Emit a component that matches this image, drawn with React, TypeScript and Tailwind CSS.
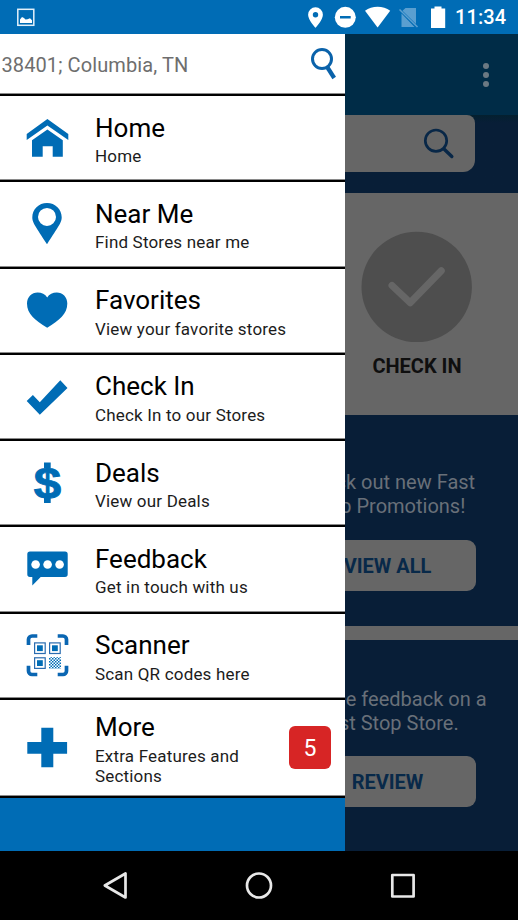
import type { ReactNode } from 'react';

type Item = { title: string; subtitle: string; icon: ReactNode; badge?: number };

const finder = (x: number, y: number) => (
  <g key={`${x}-${y}`}>
    <rect x={x + 0.6} y={y + 0.6} width="10.6" height="10.6" fill="none" stroke="#2a6cb0" strokeWidth="1.2" />
    <rect x={x + 3} y={y + 3} width="5.8" height="5.8" />
  </g>
);

const items: Item[] = [
  {
    title: 'Home',
    subtitle: 'Home',
    icon: (
      <>
        <path d="M22.4 3 43.3 18v6L22.4 9.500 1.700 24v-6z" />
        <path d="M22.4 13.6 37.8 24.3v16.4H27.7V30.3h-10v10.4H7V24.3z" />
      </>
    ),
  },
  {
    title: 'Near Me',
    subtitle: 'Find Stores near me',
    icon: (
      <path
        fillRule="evenodd"
        d="M22 1C13.700 1 7.300 7.300 7.300 15.300 7.300 20.500 10.500 24.500 22 42.200 33.500 24.500 36.700 20.500 36.700 15.300 36.700 7.300 30.300 1 22 1zm0 4.900a9 9 0 1 1 0 18 9 9 0 0 1 0-18z"
      />
    ),
  },
  {
    title: 'Favorites',
    subtitle: 'View your favorite stores',
    icon: <path d="M22.2 38.8C10 31 2 25 2 14.5 2 8 6.8 3.4 12.6 3.4c4 0 7.7 1.8 9.6 5 1.9-3.2 5.600-5 9.600-5 5.800 0 10.500 4.600 10.500 11.100 0 10.500-8 16.500-20.100 24.300z" />,
  },
  {
    title: 'Check In',
    subtitle: 'Check In to our Stores',
    icon: <path d="M35.300 5.200 42.500 13 14.800 39.700 1.700 26 7.900 20l6.900 7.200z" />,
  },
  {
    title: 'Deals',
    subtitle: 'View our Deals',
    icon: (
      <>
        <text
          transform="translate(22.4 37.5) scale(1.12 1)"
          textAnchor="middle"
          stroke="#006cb5"
          strokeWidth="0.900"
          className="font-['Liberation_Sans',sans-serif] text-[44px] font-bold"
        >
          $
        </text>
        <rect x="19" y="1.500" width="6.700" height="6" />
        <rect x="19" y="36" width="6.700" height="6" />
      </>
    ),
  },
  {
    title: 'Feedback',
    subtitle: 'Get in touch with us',
    icon: (
      <>
        <path d="M5 4.500h35a2.700 2.700 0 0 1 2.700 2.700v20A2.700 2.700 0 0 1 40 29.900H15.700L7.300 38.500v-8.600H5a2.700 2.700 0 0 1-2.700-2.700v-20A2.700 2.700 0 0 1 5 4.500z" />
        <g fill="#fff">
          <circle cx="10.600" cy="17.500" r="4.300" />
          <circle cx="22.600" cy="17.500" r="4.300" />
          <circle cx="34.600" cy="17.500" r="4.300" />
        </g>
      </>
    ),
  },
  {
    title: 'Scanner',
    subtitle: 'Scan QR codes here',
    icon: (
      <>
        <path
          fill="none"
          stroke="#0a66b2"
          strokeWidth="3.700"
          d="M3.500 11V5.500a3.500 3.500 0 0 1 3.500-3.500h5.300M32.700 2H38a3.500 3.500 0 0 1 3.500 3.500V11M41.500 31.700v5.300a3.500 3.500 0 0 1-3.500 3.500h-5.300M12.300 40.500H7A3.500 3.500 0 0 1 3.500 37v-5.300"
        />
        {finder(9, 8.3)}
        {finder(24, 8.3)}
        {finder(9, 23.2)}
        <defs>
          <pattern id="modules" width="3" height="3" patternUnits="userSpaceOnUse">
            <rect width="1.500" height="1.500" />
            <rect x="1.500" y="1.500" width="1.500" height="1.500" />
          </pattern>
        </defs>
        <rect x="24" y="23.200" width="12" height="11.500" fill="url(#modules)" />
      </>
    ),
  },
  {
    title: 'More',
    subtitle: 'Extra Features and Sections',
    icon: <path d="M16.300 1.700h12V16h13.800v11.700H28.300v13.600h-12V27.700h-14V16h14z" />,
    badge: 5,
  },
];

function StatusBar() {
  return (
    <header className="flex h-[34px] items-center bg-[#006cb5] text-white">
      <svg className="ml-[16px]" width="20" height="34" viewBox="16 0 20 34" fill="#fff">
        <rect x="17.800" y="9.300" width="16" height="16" fill="none" stroke="#e2f0fa" strokeWidth="1.500" />
        <path d="M20 23v-3.500l2-2.500 2 1 1.500 1.500 2-.3 2.500-1 2 2V23z" />
      </svg>
      <svg className="ml-auto" width="146" height="34" viewBox="304 0 146 34" fill="#fff">
        <path
          fillRule="evenodd"
          d="M315.500 7.300a7.400 7.400 0 0 0-7.400 7.400c0 5.300 7.400 13 7.400 13s7.400-7.700 7.400-13a7.400 7.400 0 0 0-7.400-7.400zm0 4.700a2.700 2.700 0 1 1 0 5.400 2.700 2.700 0 0 1 0-5.400z"
        />
        <circle cx="345.300" cy="17.300" r="10.500" />
        <rect x="340" y="16" width="10.700" height="2.500" fill="#006cb5" />
        <path d="M377.600 27.500 365 10.800c3.500-2.600 8-4 12.600-4s9.100 1.400 12.600 4z" />
        <path fill="#5a9fd0" d="M405.500 8H416v16L402.500 10.800zM401.500 13.500 414.500 27H401.500z" />
        <path stroke="#5a9fd0" strokeWidth="1.600" d="m399.500 9.500 18 17.500" />
        <path d="M434.500 6.500h7V8.500h3.700V28h-14.200V8.500h3.500z" />
      </svg>
      <span className="mr-[11px] ml-[5px] w-[52px] pt-px text-[20px] leading-[33px] font-medium tracking-[0.1px] whitespace-nowrap">11:34</span>
    </header>
  );
}

function Page() {
  return (
    <main className="h-[817px] bg-[#666]">
      <div className="flex h-[81px] items-center justify-end bg-[#002c47] pr-[29px]">
        <div className="flex flex-col gap-[3px]">
          <i className="size-[6px] rounded-full bg-[#6b7983]" />
          <i className="size-[6px] rounded-full bg-[#6b7983]" />
          <i className="size-[6px] rounded-full bg-[#6b7983]" />
        </div>
      </div>
      <div className="h-[78px] bg-gradient-to-b from-[#04202f] via-[#081e37] via-10% to-[#081e37] pr-[43px]">
        <div className="flex h-[57px] justify-end rounded-[12px] rounded-t-[8px] bg-[#666] pr-[20px]">
          <svg width="34" height="57" viewBox="421 115 34 57" fill="none" stroke="#082747">
            <circle cx="436" cy="140.700" r="10.700" strokeWidth="2.700" />
            <path d="m444 149 7.800 7.500" strokeWidth="3.400" strokeLinecap="round" />
          </svg>
        </div>
      </div>
      <div className="flex h-[222px] justify-end pt-[38px] pr-[41px]">
        <div className="flex w-[120px] flex-col items-center">
          <svg width="112" height="112" viewBox="361 231 112 112">
            <circle cx="416.700" cy="286.900" r="55.200" fill="#4e4e4e" />
            <path d="M392 285.500 410.200 302.800 441.300 270.800" fill="none" stroke="#666" strokeWidth="7" strokeLinecap="round" strokeLinejoin="round" />
          </svg>
          <span className="mt-[11px] text-[20px] leading-6 font-bold whitespace-nowrap text-[#0f0f0f]">CHECK IN</span>
        </div>
      </div>
      <Promo height="h-[211px] pt-[55px]" lines={['Check out new Fast', 'Stop Promotions!']} action="VIEW ALL" gap="mt-[22px]" />
      <div className="h-[14px]" />
      <Promo height="h-[211px] pt-[47px]" lines={['Provide feedback on a', 'Fast Stop Store.']} action="REVIEW" gap="mt-[21px]" />
    </main>
  );
}

function Promo({ height, lines, action, gap }: { height: string; lines: string[]; action: string; gap: string }) {
  return (
    <section className={`flex flex-col items-end bg-[#081e37] ${height}`}>
      <div className="flex w-[260px] flex-col items-center">
        {lines.map((line) => (
          <p key={line} className="text-[20px] leading-6 whitespace-nowrap text-[#697079]">
            {line}
          </p>
        ))}
        <button className={`mr-px h-[51px] w-[176px] rounded-[9px] bg-[#666] text-[20px] font-bold text-[#082949] ${gap}`}>{action}</button>
      </div>
    </section>
  );
}

function Row({ title, subtitle, icon, badge }: Item) {
  return (
    <li
      className={`flex border-b-2 border-black bg-white pl-[25px] shadow-[inset_0_-1px_0_#8a8a8a] ${badge ? 'h-[98px] pt-[12px]' : 'h-[86.25px] pt-[16.5px]'}`}
    >
      <svg className={`shrink-0 overflow-visible ${badge ? 'mt-[14px]' : 'mt-[3.5px]'}`} width="44" height="44" viewBox="0 0 44 44" fill="#006cb5">
        {icon}
      </svg>
      <div className="ml-[26px] w-[170px] shrink-0 whitespace-nowrap">
        <p className="text-[26px] leading-[30px] text-black">{title}</p>
        <p className={`text-[17px] leading-5 tracking-[0.18px] text-[#1c1c1c] ${badge ? 'mt-[4px] whitespace-normal' : 'mt-[3.5px]'}`}>{subtitle}</p>
      </div>
      {badge && (
        <span className="mt-[14px] ml-[24px] h-[43px] w-[42px] shrink-0 rounded-[6px] bg-[#d72525] text-center text-[23px] leading-[46px] text-white">
          {badge}
        </span>
      )}
    </li>
  );
}

function Drawer() {
  return (
    <nav className="absolute top-[34px] left-0 h-[817px] w-[345px] overflow-hidden bg-[#006cb5]">
      <div className="flex h-[62px] items-center justify-between border-b-2 border-black bg-white pr-[6px] pl-[1.500px] shadow-[inset_0_-1px_0_#8a8a8a]">
        <span className="pt-[2px] text-[20px] tracking-[0.1px] whitespace-nowrap text-[#6e6e6e]">38401; Columbia, TN</span>
        <svg width="30" height="60" viewBox="309 34 30 60" fill="none" stroke="#0a62aa">
          <circle cx="322" cy="59" r="9.500" strokeWidth="3" />
          <path d="m327.500 67.500 6.700 10.500" strokeWidth="4.200" />
        </svg>
      </div>
      <ul>
        {items.map((item) => (
          <Row key={item.title} {...item} />
        ))}
      </ul>
    </nav>
  );
}

export default function App() {
  return (
    <div className="relative h-[920px] w-[518px] overflow-hidden bg-black font-['Roboto',sans-serif]">
      <StatusBar />
      <Page />
      <Drawer />
      <footer className="h-[69px] bg-black">
        <svg width="518" height="69" viewBox="0 851 518 69" fill="none" stroke="#e8e8e8" strokeWidth="2.700" strokeLinejoin="round">
          <path d="M104.800 885.500 125.500 873.500v24z" />
          <circle cx="259" cy="885.500" r="12" />
          <rect x="392.300" y="875" width="21.300" height="21.500" />
        </svg>
      </footer>
    </div>
  );
}
